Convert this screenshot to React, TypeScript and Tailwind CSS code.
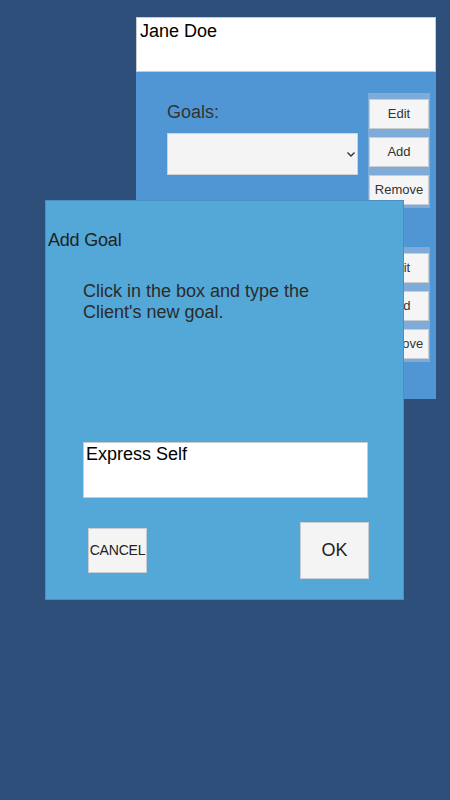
export default function App() {
  const buttons = ["Edit", "Add", "Remove"];

  const strip = (
    <div className="flex w-[62px] flex-col gap-[8px] bg-[#7fabd9] px-[1px] pb-[3px] pt-[6px]">
      {buttons.map((label) => (
        <button
          key={label}
          className="flex h-[30px] items-center justify-center border border-[#c9ced4] bg-[#f5f5f5] text-[13px] text-[#333]"
        >
          {label}
        </button>
      ))}
    </div>
  );

  return (
    <main
      className="relative h-[800px] w-[450px] overflow-hidden bg-[#2f4f7b]"
      style={{ fontFamily: '"Liberation Sans", Arial, sans-serif' }}
    >
      {/* back panel */}
      <div className="ml-[136px] pt-[17px]">
        <div className="flex h-[382px] w-[300px] flex-col bg-[#5196d4]">
          <div className="h-[55px] border border-[#c7ccd2] bg-white px-[3px] pt-[1px] text-[18px] leading-[24px] text-black">
            Jane Doe
          </div>

          <div className="flex flex-col gap-[39px] pr-[6px] pt-[21px]">
            <div className="flex justify-between">
              <div className="ml-[31px] pt-[8px]">
                <p className="h-[22px] text-[18px] leading-[22px] text-[#333]">
                  Goals:
                </p>
                <div className="mt-[10px] flex h-[42px] w-[191px] items-center justify-end border border-[#d0d3d6] bg-[#f4f4f4] pr-[1px]">
                  <svg width="10" height="8" viewBox="0 0 10 8">
                    <path
                      d="M1.5 2.5 L5 6 L8.5 2.5"
                      fill="none"
                      stroke="#333"
                      strokeWidth="1.4"
                    />
                  </svg>
                </div>
              </div>
              {strip}
            </div>

            <div className="flex justify-end">{strip}</div>
          </div>
        </div>
      </div>

      {/* dialog */}
      <div className="absolute left-[45px] top-[200px] h-[400px] w-[359px] border border-[#4b8ec0] bg-[#53a8d7]">
        <p className="ml-[2px] mt-[28px] h-[22px] text-[18px] leading-[22px] tracking-[-0.2px] text-[#222]">
          Add Goal
        </p>

        <p className="ml-[37px] mt-[30px] text-[18px] leading-[21px] text-[#2b2b2b]">
          Click in the box and type the
          <br />
          Client's new goal.
        </p>

        <div className="ml-[37px] mt-[119px] h-[56px] w-[285px] border border-[#c7ccd2] bg-white px-[2px] pt-[0px] text-[18px] leading-[22px] text-black">
          Express Self
        </div>

        <div className="ml-[42px] mt-[24px] flex w-[281px] items-center justify-between">
          <button className="flex h-[45px] w-[59px] items-center justify-center border border-[#c9ced4] bg-[#f4f4f4] text-[14px] tracking-[-0.2px] text-[#222]">
            CANCEL
          </button>
          <button className="flex h-[57px] w-[69px] items-center justify-center border border-[#c9ced4] bg-[#f4f4f4] text-[18px] text-[#222]">
            OK
          </button>
        </div>
      </div>
    </main>
  );
}
